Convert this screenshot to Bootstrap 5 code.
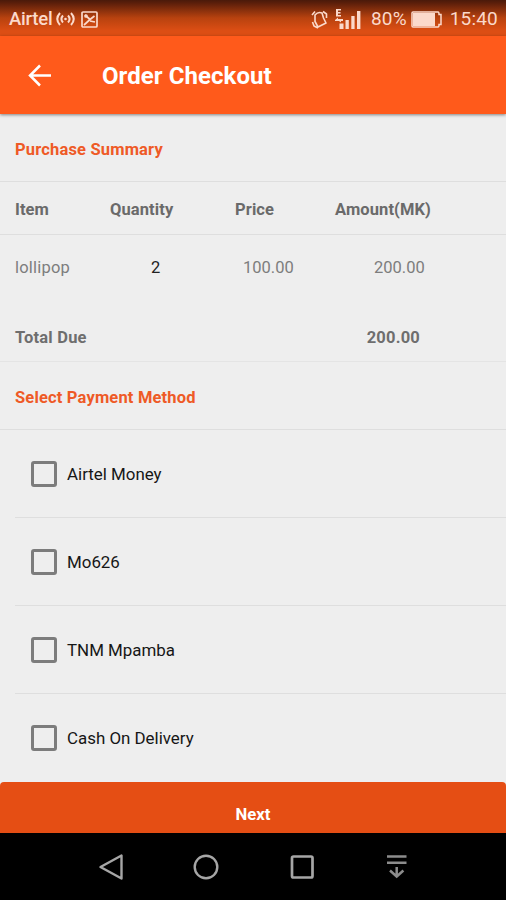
<!DOCTYPE html>
<html lang="en">
<head>
<meta charset="utf-8">
<meta name="viewport" content="width=device-width, initial-scale=1">
<title>Order Checkout</title>
<link rel="stylesheet" href="https://cdn.jsdelivr.net/npm/bootstrap@5.3.0/dist/css/bootstrap.min.css">
<style>
body{font-family:Roboto,"Liberation Sans",sans-serif;background:#eee;height:900px;overflow:hidden;font-size:16.5px;line-height:24px;color:#1c1c1c}
svg{display:block;flex:none}
.statusbar{height:36px;background:linear-gradient(#4a1a0a 0,#5a1e0a 8%,#b8420f 50%,#dc4e14 85%,#dc4e14 100%);color:#fbd9cb;font-size:19px;padding:2px 8px 0 9px}
.carrier{font-size:18.5px;font-weight:500;letter-spacing:-.2px}
.ic-wifi{margin-left:3px}
.ic-image{margin-left:6px}
.ic-signal{margin-left:7px}
.percent{margin-left:10px;letter-spacing:.1px}
.clock{margin-left:7px;letter-spacing:.2px}
.appbar{height:78px;background:#ff5a1b;color:#fff;box-shadow:0 1px 3px rgba(0,0,0,.45);z-index:1;padding:2px 0 0 27px}
.appbar h1{font-size:24px;font-weight:700;letter-spacing:.06px;margin-left:49px}
.sect{height:68px;color:#ee5a26;font-weight:700;padding:5px 0 0 15px;border-bottom:1px solid #dedede;letter-spacing:.17px}
.grid-row{display:grid;grid-template-columns:91px 101px 107px 167px;padding-left:15px;color:#7d7d7d;align-items:center}
.grid-row.heads{height:53px;padding-top:3px;border-bottom:1px solid #dedede;font-weight:700;color:#6a6a6a;letter-spacing:.1px}
.grid-row.entry{height:65px;padding-top:0}
.entry .nm{letter-spacing:.2px}
.entry .qty{color:#222;padding-left:45px}
.heads .qty{padding-left:4px}
.heads .price{padding-left:28px}
.heads .amount{padding-left:21px}
.entry .price{padding-left:36px}
.entry .amount{padding-left:60px}
.totals{height:62px;color:#6e6e6e;font-weight:700;border-bottom:1px solid #e4e4e4;padding:15px 86px 0 15px;letter-spacing:.2px}
.opt{height:88px;margin-left:15px;padding-left:16px;gap:10px;border-bottom:1px solid #dedede;color:#161616;font-size:16.9px}
.opt:last-child{border-bottom:0}
.opt .form-check-input{width:26px;height:26px;margin:0;border:3px solid #7c7c7c;border-radius:3px;background:transparent}
.next{height:51px;background:#e54e14;color:#fff;font-weight:700;font-size:16.7px;border:0;border-radius:4px 4px 0 0;padding:15px 0 0}
.navkeys{height:67px;background:#000;padding:0 96px 0 97px}
</style>
</head>
<body class="d-flex flex-column">
<header class="statusbar d-flex align-items-center flex-shrink-0">
  <span class="carrier">Airtel</span>
  <svg class="ic-wifi" width="19" height="16" viewBox="0 0 19 16" fill="none" stroke="#fbd9cb" stroke-width="2"><path d="M4 2Q-1.500 8 4 14M7 4.500Q3.800 8 7 11.500M15 2Q20.500 8 15 14M12 4.500Q15.200 8 12 11.500"/><circle cx="9.500" cy="8" r="1.300" fill="#fbd9cb" stroke="none"/></svg>
  <svg class="ic-image" width="17" height="17" viewBox="0 0 17 17" fill="none" stroke="#fbd9cb" stroke-width="1.700"><rect x="1" y="1" width="15" height="15" rx="1"/><path d="M3 14L9 8.500 13.500 5M4 4l4.500 4M9 10l5 1"/><circle cx="5" cy="5" r="1"/></svg>
  <svg class="ms-auto" width="17" height="19" viewBox="0 0 17 19" fill="none" stroke="#fbd9cb" stroke-width="1.600" stroke-linejoin="round"><path d="M4 5Q7 1.500 11 3l1.500 5 2.500 5-2 1-6 3-3-5.500zM1 5L4 1.500M1.500 12l1.500 4 4 2M12 1.500l3.500 2.500v4"/></svg>
  <svg class="ic-signal" width="26" height="22" viewBox="0 0 26 22" fill="#fbd9cb"><path d="M1 1h5v1.500H3v1.500h2.500v1.500H3V7h3v1.500H1zM0 12l3-2.500V11h5v2H6v1.500L4 13H0zM4.500 15.500h4V21h-4zM10.500 12h3.300v9h-3.300zM16.300 8h3.300v13h-3.300zM22 3h3.400v18H22z"/></svg>
  <span class="percent">80%</span>
  <svg class="ms-1" width="32" height="17" viewBox="0 0 32 17" fill="none" stroke="#fbd9cb" stroke-width="1.500"><path d="M27 1H2Q1 1 1 2v13q0 1 1 1h25q1 0 1-2.500h2v-10h-2Q28 1 27 1z"/><rect x="2" y="2" width="22" height="13" fill="#fbd9cb" stroke="none"/></svg>
  <span class="clock">15:40</span>
</header>
<nav class="appbar d-flex align-items-center position-relative flex-shrink-0">
  <svg width="26" height="24" viewBox="0 0 26 24" fill="none" stroke="#fff" stroke-width="2.500"><path d="M24 11.500H3.500M13 1.500L3 11.500 13 21.500"/></svg>
  <h1 class="mb-0">Order Checkout</h1>
</nav>
<main class="flex-shrink-0">
  <div class="sect d-flex align-items-center">Purchase Summary</div>
  <div class="grid-row heads"><span>Item</span><span class="qty">Quantity</span><span class="price">Price</span><span class="amount">Amount(MK)</span></div>
  <div class="grid-row entry"><span class="nm">lollipop</span><span class="qty">2</span><span class="price">100.00</span><span class="amount">200.00</span></div>
  <div class="totals d-flex align-items-center justify-content-between"><span>Total Due</span><span>200.00</span></div>
  <div class="sect d-flex align-items-center">Select Payment Method</div>
  <div>
    <label class="opt d-flex align-items-center"><input class="form-check-input" type="checkbox"><span>Airtel Money</span></label>
    <label class="opt d-flex align-items-center"><input class="form-check-input" type="checkbox"><span>Mo626</span></label>
    <label class="opt d-flex align-items-center"><input class="form-check-input" type="checkbox"><span>TNM Mpamba</span></label>
    <label class="opt d-flex align-items-center"><input class="form-check-input" type="checkbox"><span>Cash On Delivery</span></label>
  </div>
</main>
<button class="next w-100 flex-shrink-0">Next</button>
<footer class="navkeys d-flex align-items-center justify-content-between flex-shrink-0">
  <svg width="28" height="28" viewBox="0 0 28 28" fill="none" stroke="#a6a6a6" stroke-width="2.400" stroke-linejoin="round"><path d="M24.500 2.500v23L3.500 14z"/></svg>
  <svg width="28" height="28" viewBox="0 0 28 28" fill="none" stroke="#a6a6a6" stroke-width="2.400"><circle cx="14" cy="14" r="11.300"/></svg>
  <svg width="28" height="28" viewBox="0 0 28 28" fill="none" stroke="#a6a6a6" stroke-width="2.700"><rect x="5" y="3.500" width="20.500" height="21" rx="1.500"/></svg>
  <svg width="28" height="28" viewBox="0 0 28 28" fill="none" stroke="#8c8c8c" stroke-width="2.500"><path d="M5 3.500h19.500M5 9.800h19.500M14.700 14v9.500M8 17.500l6.700 6 6.700-6"/></svg>
</footer>
<script src="https://cdn.jsdelivr.net/npm/bootstrap@5.3.0/dist/js/bootstrap.bundle.min.js"></script>
</body>
</html>
